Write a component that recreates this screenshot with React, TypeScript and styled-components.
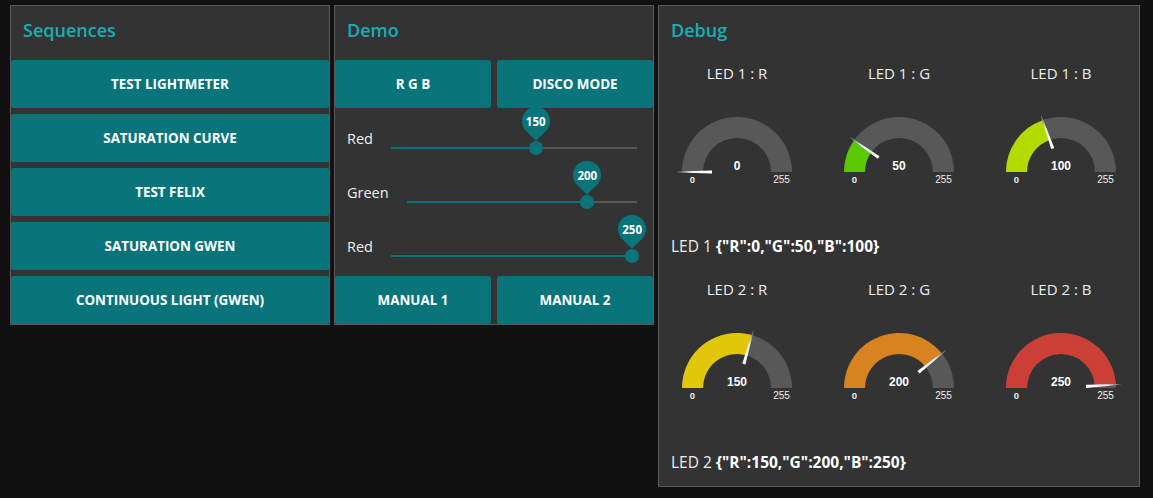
import React from "react";
import styled, { createGlobalStyle } from "styled-components";

const Global = createGlobalStyle`
  html, body { margin: 0; padding: 0; background: #111111; }
  body { font-family: "Open Sans", "Noto Sans", sans-serif; color: #eeeeee; }
`;

const Page = styled.div`
  display: flex;
  align-items: flex-start;
  gap: 4px;
  padding: 5px 0 0 10px;
`;

const Panel = styled.section<{ $w: number }>`
  box-sizing: border-box;
  width: ${(p) => p.$w}px;
  background: #333333;
  border: 1px solid #595959;
  display: flex;
  flex-direction: column;
`;

const TitleRow = styled.div`
  box-sizing: border-box;
  height: 54px;
  padding: 12px 12px 0;
  font-size: 18px;
  font-weight: 600;
  line-height: 24px;
  color: #16aeb9;
`;

const Stack = styled.div`
  display: flex;
  flex-direction: column;
  gap: 6px;
`;

const Pair = styled.div`
  display: grid;
  grid-template-columns: 1fr 1fr;
  gap: 6px;
`;

const Btn = styled.button`
  height: 48px;
  border: none;
  border-radius: 2px;
  background: #097479;
  color: #ffffff;
  font-family: "Open Sans", "Noto Sans", sans-serif;
  font-weight: 700;
  font-size: 13.4px;
  text-transform: uppercase;
  padding: 0;
  cursor: pointer;
`;

const SliderRow = styled.div`
  height: 48px;
  display: flex;
  align-items: flex-start;
  padding: 0 16px 0 12px;
  gap: 18px;
`;

const SliderLabel = styled.span`
  margin-top: 15px;
  font-size: 14.5px;
  line-height: 20px;
  color: #eeeeee;
`;

const SliderArea = styled.div`
  position: relative;
  flex: 1;
  height: 48px;
`;

const Track = styled.div`
  position: absolute;
  left: 0;
  right: 0;
  top: 33px;
  height: 2px;
  background: #575757;
`;

const Fill = styled.div`
  position: absolute;
  left: 0;
  top: 33px;
  height: 2px;
  background: #097479;
`;

const Thumb = styled.div`
  position: absolute;
  top: 27px;
  width: 14px;
  height: 14px;
  margin-left: -7px;
  border-radius: 50%;
  background: #097479;
`;

const Pin = styled.div`
  position: absolute;
  top: -7px;
  width: 28px;
  height: 28px;
  margin-left: -14px;
  display: flex;
  align-items: center;
  justify-content: center;
  &::before {
    content: "";
    position: absolute;
    inset: 0;
    background: #097479;
    border-radius: 50% 50% 0 50%;
    transform: rotate(45deg);
  }
`;

const PinText = styled.span`
  position: relative;
  font-family: "Open Sans", sans-serif;
  font-weight: 700;
  font-size: 11.5px;
  color: #ffffff;
`;

const GaugeGrid = styled.div`
  display: grid;
  grid-template-columns: repeat(3, 156px);
  gap: 6px;
`;

const GaugeBox = styled.div`
  height: 156px;
  display: flex;
  flex-direction: column;
  align-items: center;
`;

const GaugeTitle = styled.div`
  height: 26px;
  line-height: 26px;
  font-size: 15px;
  color: #eeeeee;
`;

const TextRow = styled.div`
  height: 48px;
  line-height: 48px;
  padding-left: 12px;
  font-size: 15.5px;
  color: #eeeeee;
  b { font-weight: 700; color: #ffffff; }
`;

function Slider({ label, value }: { label: string; value: number }) {
  const pct = (value / 255) * 100;
  return (
    <SliderRow>
      <SliderLabel>{label}</SliderLabel>
      <SliderArea>
        <Track />
        <Fill style={{ width: `${pct}%` }} />
        <Thumb style={{ left: `${pct}%` }} />
        <Pin style={{ left: `${pct}%` }}>
          <PinText>{value}</PinText>
        </Pin>
      </SliderArea>
    </SliderRow>
  );
}

const lerp = (a: number[], b: number[], t: number) =>
  a.map((v, i) => Math.round(v + (b[i] - v) * t));

function gaugeColor(v: number) {
  const g = [0, 181, 0];
  const y = [230, 230, 0];
  const r = [202, 56, 56];
  const f = v / 255;
  const c = f < 0.5 ? lerp(g, y, f * 2) : lerp(y, r, (f - 0.5) * 2);
  return `rgb(${c[0]},${c[1]},${c[2]})`;
}

function Gauge({ title, value, id }: { title: string; value: number; id: string }) {
  const cx = 78;
  const cy = 86;
  const R = 55;
  const r = 34;
  const th = Math.PI * (1 - value / 255);
  const pt = (rad: number, a: number) => [cx + rad * Math.cos(a), cy - rad * Math.sin(a)];
  const [ox, oy] = pt(R, th);
  const [ix, iy] = pt(r, th);
  const bg = `M ${cx - R} ${cy} A ${R} ${R} 0 0 1 ${cx + R} ${cy} L ${cx + r} ${cy} A ${r} ${r} 0 0 0 ${cx - r} ${cy} Z`;
  const fg = `M ${cx - R} ${cy} A ${R} ${R} 0 0 1 ${ox} ${oy} L ${ix} ${iy} A ${r} ${r} 0 0 0 ${cx - r} ${cy} Z`;
  const ux = Math.cos(th);
  const uy = -Math.sin(th);
  const px = Math.sin(th);
  const py = Math.cos(th);
  const r1 = 25;
  const r2 = 60;
  const a1 = [cx + ux * r1, cy + uy * r1];
  const a2 = [cx + ux * r2, cy + uy * r2];
  const w1 = 1.6;
  const w2 = 0.4;
  const needle = [
    [a1[0] + px * w1, a1[1] + py * w1],
    [a2[0] + px * w2, a2[1] + py * w2],
    [a2[0] - px * w2, a2[1] - py * w2],
    [a1[0] - px * w1, a1[1] - py * w1],
  ]
    .map((p) => p.join(","))
    .join(" ");
  return (
    <GaugeBox>
      <GaugeTitle>{title}</GaugeTitle>
      <svg width="156" height="130" viewBox="0 0 156 130">
        <defs>
          <linearGradient id={id} gradientUnits="userSpaceOnUse" x1={a1[0]} y1={a1[1]} x2={a2[0]} y2={a2[1]}>
            <stop offset="0" stopColor="#ffffff" />
            <stop offset="0.6" stopColor="#f0f0f0" />
            <stop offset="1" stopColor="#555555" />
          </linearGradient>
        </defs>
        <path d={bg} fill="#585858" />
        {value > 0 && <path d={fg} fill={gaugeColor(value)} />}
        <polygon points={needle} fill={`url(#${id})`} />
        <text x={cx} y={84} textAnchor="middle" fontFamily="Liberation Sans, Arial, sans-serif" fontWeight="700" fontSize="12" fill="#ffffff">
          {value}
        </text>
        <text x={cx - 44.5} y={97} textAnchor="middle" fontFamily="Liberation Sans, Arial, sans-serif" fontWeight="700" fontSize="9.5" fill="#eeeeee">
          0
        </text>
        <text x={cx + 44.5} y={97} textAnchor="middle" fontFamily="Liberation Sans, Arial, sans-serif" fontSize="10" fill="#eeeeee">
          255
        </text>
      </svg>
    </GaugeBox>
  );
}

export default function App() {
  const led1 = { R: 0, G: 50, B: 100 };
  const led2 = { R: 150, G: 200, B: 250 };
  return (
    <>
      <Global />
      <Page>
        <Panel $w={320}>
          <TitleRow>Sequences</TitleRow>
          <Stack>
            <Btn>Test lightmeter</Btn>
            <Btn>Saturation curve</Btn>
            <Btn>Test Felix</Btn>
            <Btn>Saturation Gwen</Btn>
            <Btn>Continuous light (Gwen)</Btn>
          </Stack>
        </Panel>
        <Panel $w={320}>
          <TitleRow>Demo</TitleRow>
          <Stack>
            <Pair>
              <Btn>R G B</Btn>
              <Btn>Disco mode</Btn>
            </Pair>
            <Slider label="Red" value={150} />
            <Slider label="Green" value={200} />
            <Slider label="Red" value={250} />
            <Pair>
              <Btn>Manual 1</Btn>
              <Btn>Manual 2</Btn>
            </Pair>
          </Stack>
        </Panel>
        <Panel $w={482}>
          <TitleRow>Debug</TitleRow>
          <Stack>
            <GaugeGrid>
              {(["R", "G", "B"] as const).map((k) => (
                <Gauge key={k} id={`g1${k}`} title={`LED 1 : ${k}`} value={led1[k]} />
              ))}
            </GaugeGrid>
            <TextRow>
              LED 1 <b>{JSON.stringify(led1)}</b>
            </TextRow>
            <GaugeGrid>
              {(["R", "G", "B"] as const).map((k) => (
                <Gauge key={k} id={`g2${k}`} title={`LED 2 : ${k}`} value={led2[k]} />
              ))}
            </GaugeGrid>
            <TextRow>
              LED 2 <b>{JSON.stringify(led2)}</b>
            </TextRow>
          </Stack>
        </Panel>
      </Page>
    </>
  );
}
